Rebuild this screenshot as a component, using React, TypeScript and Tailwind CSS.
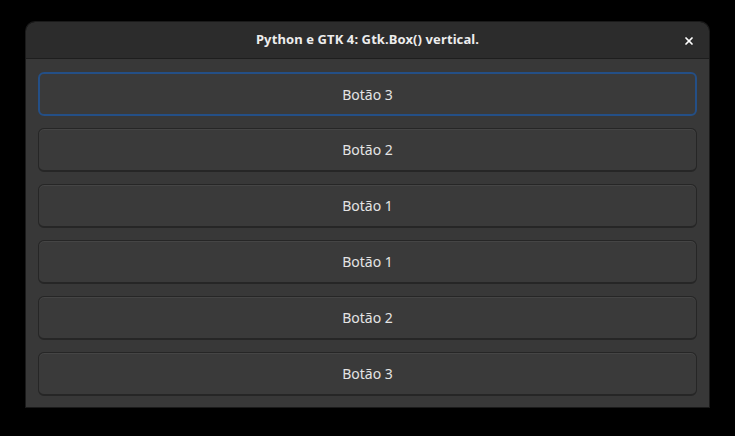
import { X } from "lucide-react";

const labels = ["Botão 3", "Botão 2", "Botão 1", "Botão 1", "Botão 2", "Botão 3"];

export default function App() {
  return (
    <div className="w-[735px] h-[436px] bg-black pt-[22px] pl-[26px] font-['Noto_Sans',sans-serif]">
      <div className="w-[683px] flex flex-col rounded-t-[9px] overflow-hidden shadow-[0_0_0_1px_#1a1a1a]">
        {/* header bar */}
        <div className="h-[37px] bg-[#2c2c2c] border-b border-[#1e1e1e] flex items-center justify-center relative">
          <span className="text-[13px] font-bold text-[#ededed] tracking-[0.1px]">
            Python e GTK 4: Gtk.Box() vertical.
          </span>
          <X className="absolute right-[14px] top-[13px] w-[12px] h-[12px] text-white" strokeWidth={3.5} />
        </div>
        {/* content */}
        <div className="bg-[#383838] px-[12px] pt-[13px] pb-[11px] flex flex-col gap-[12px]">
          {labels.map((l, i) => (
            <div
              key={i}
              className={
                i === 0
                  ? "h-[44px] rounded-[6px] bg-[#3a3a3a] border-2 border-[#244f86] flex items-center justify-center text-[14px] text-[#e4e4e4]"
                  : "h-[44px] rounded-[6px] bg-[#3a3a3a] border border-[#262626] border-b-[2px] shadow-[inset_0_1px_0_#454545] flex items-center justify-center text-[14px] text-[#e4e4e4]"
              }
            >
              {l}
            </div>
          ))}
        </div>
      </div>
    </div>
  );
}
